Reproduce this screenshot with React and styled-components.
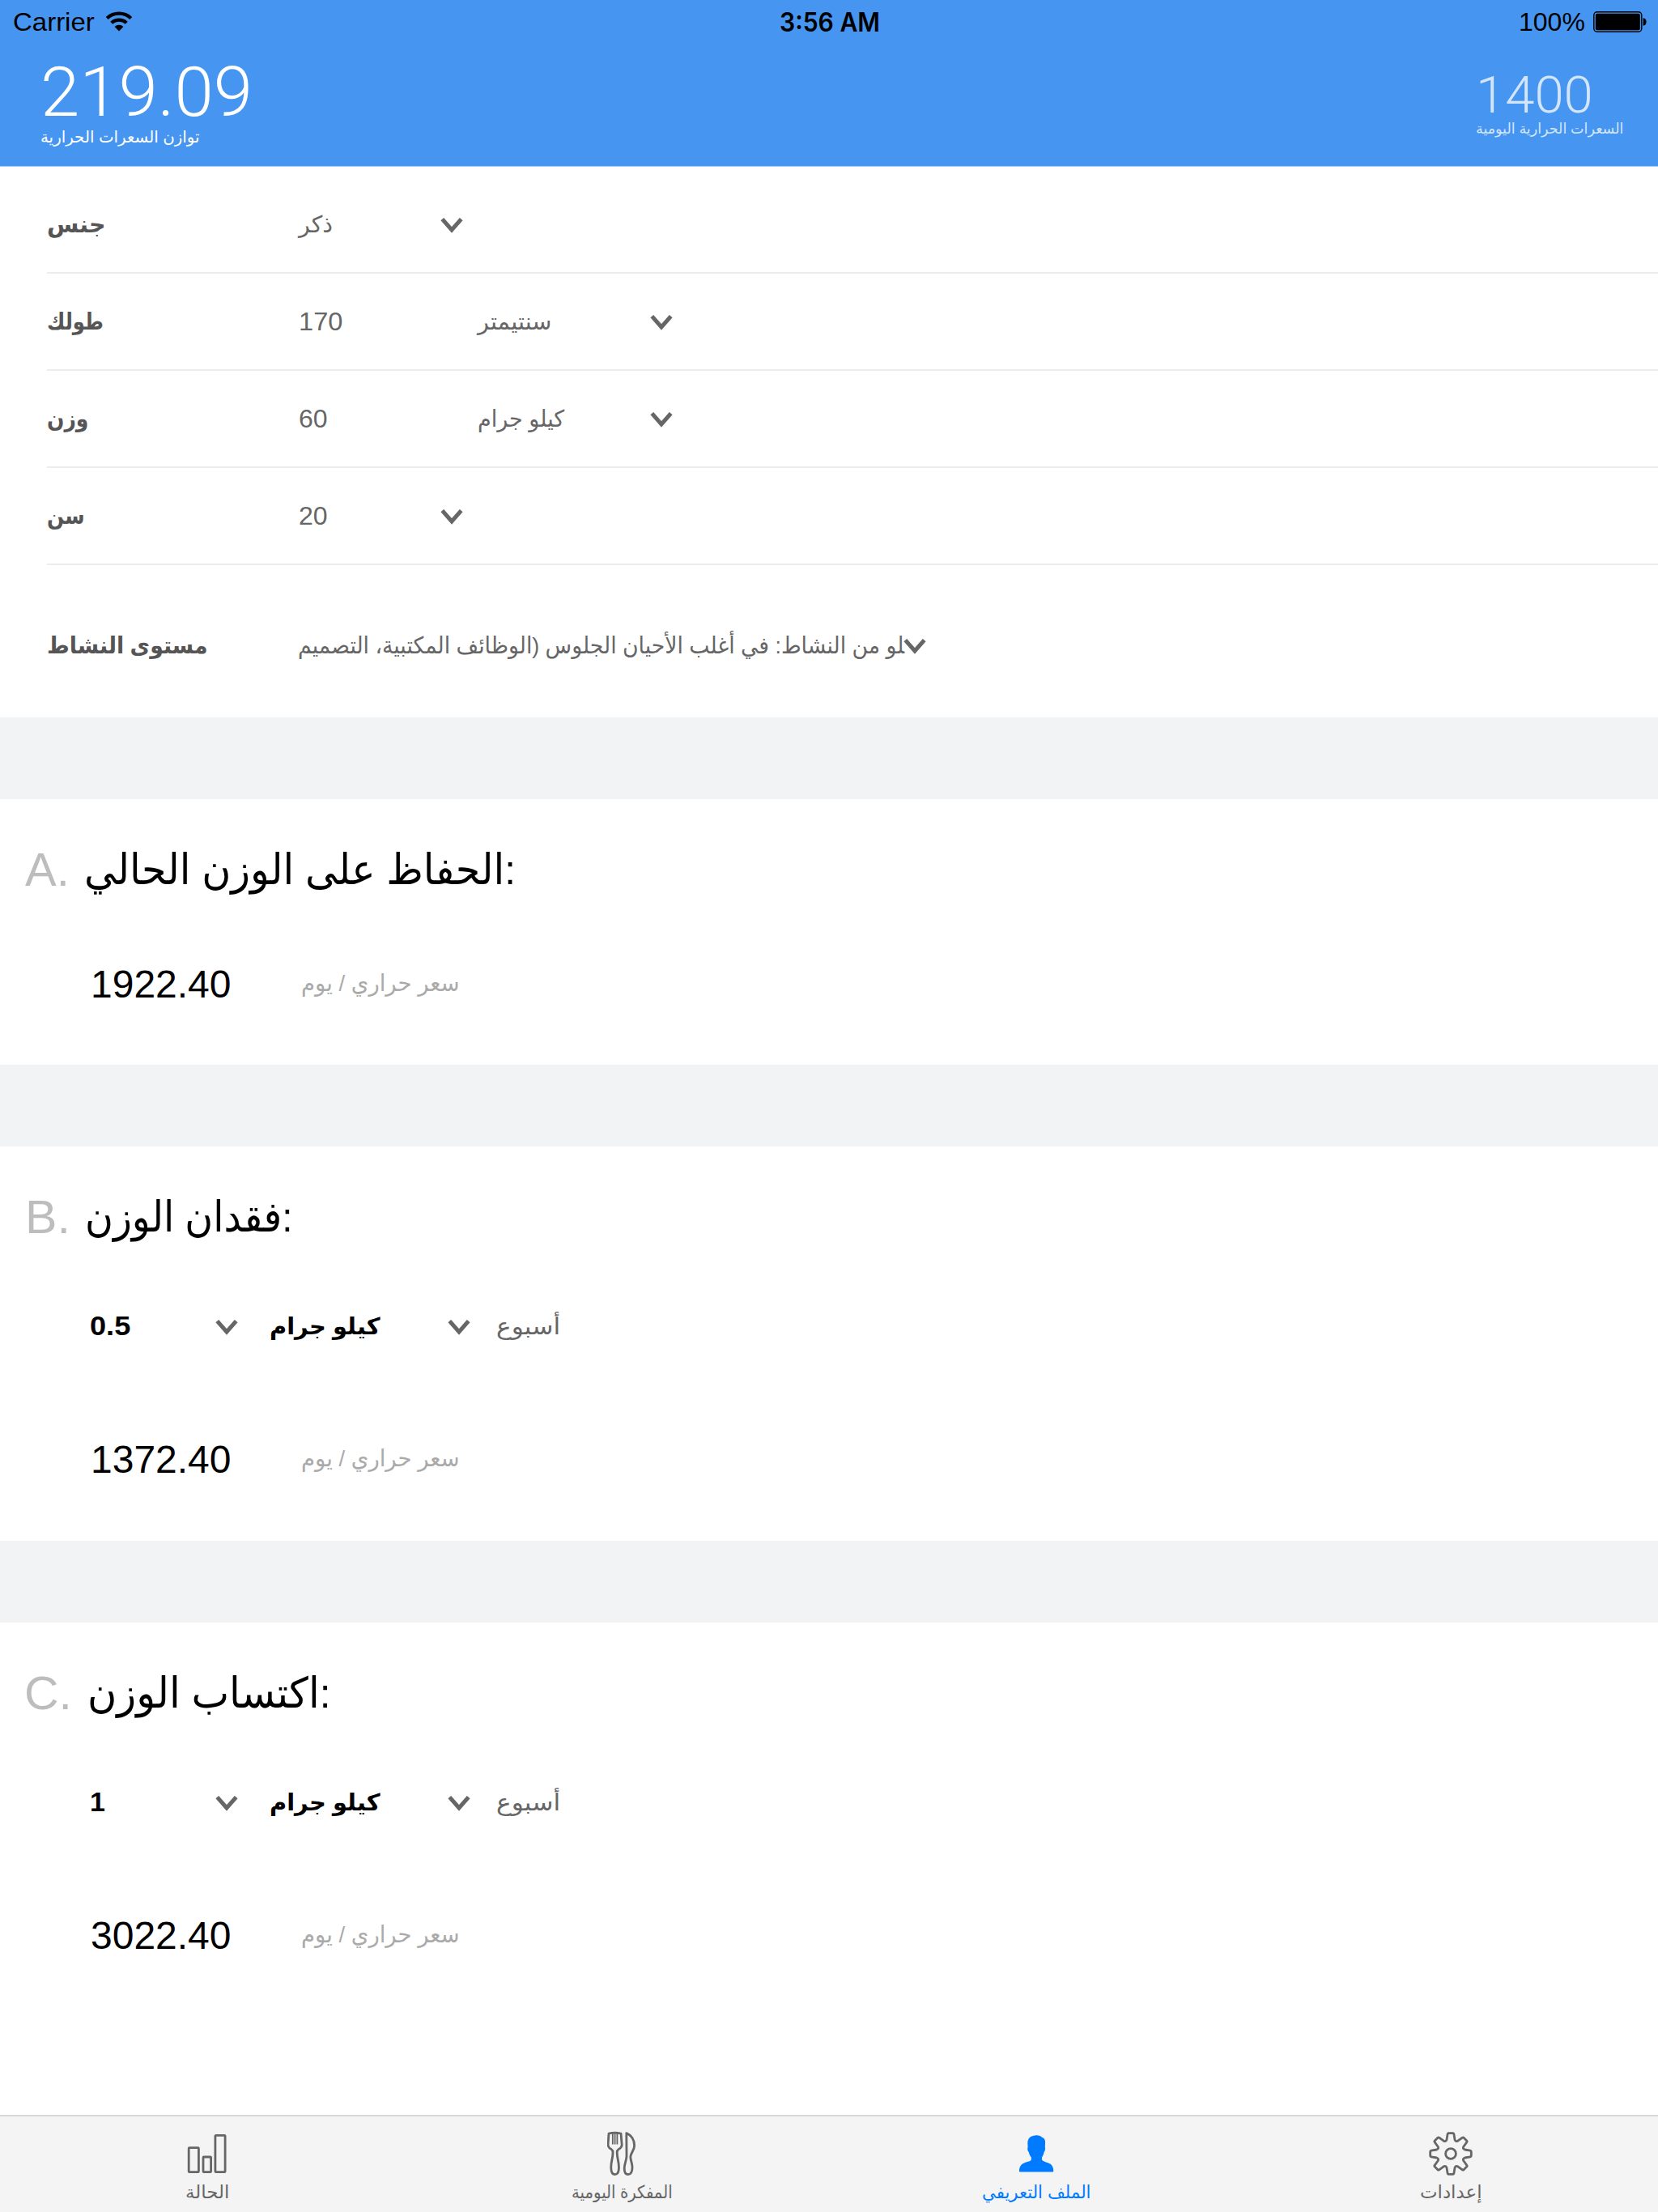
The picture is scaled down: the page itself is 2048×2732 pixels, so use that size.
import React, { useLayoutEffect, useRef, useState } from "react";
import styled, { createGlobalStyle } from "styled-components";

const GlobalStyle = createGlobalStyle`
  * { box-sizing: border-box; }
  body {
    margin: 0;
    background: #fff;
    font-family: "Liberation Sans", "DejaVu Sans", sans-serif;
    -webkit-font-smoothing: antialiased;
  }
`;

/* ---------- text fitted to a column width ---------- */

const TextBox = styled.span`
  display: block;
  flex: none;
  width: ${(p) => p.$width}px;
  margin-left: ${(p) => p.$gap || 0}px;
  font-size: ${(p) => p.$size}px;
  line-height: 1;
  font-weight: ${(p) => p.$weight || 400};
  font-family: ${(p) => (p.$face ? `${p.$face}, "Liberation Sans", sans-serif` : "inherit")};
  color: ${(p) => p.$color || "inherit"};
`;

const TextRun = styled.span`
  display: inline-block;
  white-space: pre;
  transform-origin: 0 50%;
  direction: ${(p) => (p.$rtl ? "rtl" : "ltr")};
`;

function Text({ children, width, size, rise = 0, rtl, ...rest }) {
  const run = useRef(null);
  const [scale, setScale] = useState(1);
  useLayoutEffect(() => {
    setScale(width / run.current.offsetWidth);
  }, [width, size, children]);
  const styleProps = Object.fromEntries(Object.entries(rest).map(([k, v]) => ["$" + k, v]));
  return (
    <TextBox $width={width} $size={size} {...styleProps}>
      <TextRun
        ref={run}
        $rtl={rtl}
        style={{ transform: `translateY(${-rise}px) scaleX(${scale})` }}
      >
        {children}
      </TextRun>
    </TextBox>
  );
}

const Arabic = (props) => <Text rtl size={28.5} rise={1} {...props} />;

/* ---------- layout ---------- */

const Screen = styled.div`
  display: flex;
  flex-direction: column;
  width: 2048px;
  height: 2732px;
  background: #fff;
  overflow: hidden;
`;

const Header = styled.header`
  flex: none;
  height: 206px;
  background: #4595f1;
  border-bottom: 1px solid #a6cdf8;
`;

const StatusBar = styled.div`
  display: grid;
  grid-template-columns: 1fr auto 1fr;
  align-items: center;
  height: 54px;
  padding: 0 14px 0 16px;
  color: #000;
`;

const StatusSide = styled.div`
  display: flex;
  align-items: center;
  justify-content: ${(p) => (p.$end ? "flex-end" : "flex-start")};
`;

const Totals = styled.div`
  display: flex;
  justify-content: space-between;
  padding: 0 43px 0 50px;
`;

const Total = styled.div`
  display: flex;
  flex-direction: column;
  padding-top: ${(p) => p.$top}px;
  gap: ${(p) => p.$gap}px;
  color: ${(p) => p.$color};
`;

const Form = styled.section`
  flex: none;
  height: 680px;
  padding: 12px 0 0 58px;
  color: #666;
`;

const Row = styled.div`
  display: flex;
  align-items: baseline;
  height: ${(p) => p.$height}px;
  padding-top: ${(p) => p.$top}px;
  padding-left: ${(p) => p.$left || 0}px;
  &::before {
    content: "\\200b";
    width: 0;
    font-size: ${(p) => p.$strut}px;
    line-height: 1;
  }
`;

const Field = styled(Row)`
  border-bottom: 2px solid #ececec;
`;

const Cell = styled.div`
  flex: none;
  width: ${(p) => p.$width}px;
`;

const Band = styled.div`
  flex: none;
  height: 101px;
  background: #f2f3f5;
`;

const Plan = styled.section`
  flex: none;
  height: ${(p) => p.$height}px;
`;

const ChevronIcon = styled.svg`
  flex: none;
  display: block;
  width: 28px;
  height: 19px;
  margin-bottom: ${(p) => p.$lift || 0}px;
`;

const Chevron = ({ lift = -2 }) => (
  <ChevronIcon viewBox="0 0 28 19" $lift={lift}>
    <path d="M2.3 1.6 L14 15 L25.7 1.6" fill="none" stroke="#666" strokeWidth="5" />
  </ChevronIcon>
);

/* ---------- tab bar ---------- */

const TabBar = styled.nav`
  flex: none;
  display: grid;
  grid-template-columns: repeat(4, 1fr);
  height: 120px;
  margin-top: auto;
  background: #f4f4f4;
  border-top: 2px solid #d8d8d8;
`;

const Tab = styled.div`
  display: flex;
  flex-direction: column;
  align-items: center;
  padding-top: 18px;
  gap: 9px;
  color: ${(p) => (p.$active ? "#007aff" : "#666")};
`;

const Icon = styled.svg`
  display: block;
  flex: none;
  width: ${(p) => p.$w}px;
  height: ${(p) => p.$h}px;
  fill: none;
  stroke: currentColor;
  stroke-width: 2.8;
  stroke-linejoin: round;
  stroke-linecap: round;
`;

const BarsIcon = () => (
  <Icon $w={56} $h={56} viewBox="0.4 0 56 56">
    <rect x="5.6" y="20.6" width="12.2" height="30" rx="0.8" />
    <rect x="23.4" y="32" width="9.6" height="18.6" rx="0.8" />
    <rect x="38.3" y="5.4" width="12.2" height="45.2" rx="0.8" />
  </Icon>
);

const CutleryIcon = () => (
  <Icon $w={36} $h={56} viewBox="0.6 0 36 56">
    <path d="M2.6 3 Q10 1.4 17.6 3 L18.8 17.5 Q18 21 14.6 22.6 Q12.6 23.8 12.8 27 C12.8 34 15.4 38 15 46 C14.8 51 12.8 53.6 10.2 53.6 C7.6 53.6 5.6 51 5.4 46 C5 38 7.6 34 7.6 27 Q7.8 23.8 5.8 22.6 Q2.4 21 1.6 17.5 Z" />
    <path d="M7.4 3 V16.5 M10.2 3 V16.5 M13 3 V16.5" strokeWidth="1.8" strokeLinecap="butt" />
    <path d="M24.4 2.6 C30.5 5 34.2 11 34.2 18 C34.2 24 29.6 27 29.4 32 C29.4 37 32 40 31.6 46 C31.2 51 29.2 53.6 26.4 53.6 C23.6 53.6 21.8 51 21.8 46 C21.8 40 24.4 37 24.6 31 Z" />
  </Icon>
);

const PersonIcon = () => (
  <Icon $w={44} $h={56} viewBox="-1 -5 44 56">
    <path
      fill="currentColor"
      stroke="none"
      d="M21 0.2 C24.4 0 26.8 1.2 28 2.8 C31 3.4 32.4 6 32 10.5 L31.8 15 C32.4 17 31.8 19.8 30.6 21 C30.2 24 29 26 28 27.6 V30.4 C29.4 33 34.6 33 38.6 35.8 C41.6 38.2 42.3 42 42.3 44.4 Q42.3 45.4 41.3 45.4 H0.9 Q-0.1 45.4 -0.1 44.4 C-0.1 42 0.6 38.2 3.6 35.8 C7.6 33 13.4 33 14.8 30.4 V27.6 C13.6 26 12.2 24 11.8 21 C10.4 19.8 9.8 17 10.6 15 L10.3 9.5 C10.5 3.4 15 0.4 21 0.2 Z"
    />
  </Icon>
);

const gearPath = (() => {
  const parts = [];
  for (let i = 0; i < 8; i += 1) {
    const a = (i * Math.PI) / 4;
    const at = (x, y) =>
      `${(x * Math.cos(a) - y * Math.sin(a)).toFixed(2)} ${(x * Math.sin(a) + y * Math.cos(a)).toFixed(2)}`;
    parts.push(`${i ? "L" : "M"}${at(-5, -17.4)} L${at(-3.9, -24.2)} Q${at(-3.7, -25.3)} ${at(-2.6, -25.3)}`);
    parts.push(`L${at(2.6, -25.3)} Q${at(3.7, -25.3)} ${at(3.9, -24.2)} L${at(5, -17.4)}`);
    const b = a + Math.PI / 4;
    const nx = -5 * Math.cos(b) + 17.4 * Math.sin(b);
    const ny = -5 * Math.sin(b) - 17.4 * Math.cos(b);
    const mid = a + Math.PI / 8;
    parts.push(`Q${(15.6 * Math.sin(mid)).toFixed(2)} ${(-15.6 * Math.cos(mid)).toFixed(2)} ${nx.toFixed(2)} ${ny.toFixed(2)}`);
  }
  return parts.join(" ") + " Z";
})();

const GearIcon = () => (
  <Icon $w={56} $h={56} viewBox="-28 -28 56 56">
    <path d={gearPath} />
    <circle r="6.4" />
  </Icon>
);

/* ---------- status icons ---------- */

const StatusIcon = styled.svg`
  display: block;
  flex: none;
  width: ${(p) => p.$w}px;
  height: ${(p) => p.$h}px;
  margin-left: ${(p) => p.$gap}px;
`;

const WifiIcon = () => (
  <StatusIcon $w={34} $h={26} $gap={13} viewBox="-17 -24.5 34 26">
    <path d="M-14.8 -16 A21.8 21.8 0 0 1 14.8 -16" fill="none" stroke="#000" strokeWidth="4.2" />
    <path d="M-9.3 -10.2 A13.8 13.8 0 0 1 9.3 -10.2" fill="none" stroke="#000" strokeWidth="4.2" />
    <path d="M0 0 L-5.4 -5.6 A7.8 7.8 0 0 1 5.4 -5.6 Z" fill="#000" />
  </StatusIcon>
);

const BatteryIcon = () => (
  <StatusIcon $w={66} $h={26} $gap={10} viewBox="0 0 66 26">
    <rect x="0.8" y="0.8" width="59" height="24.4" rx="4" fill="none" stroke="#000" strokeWidth="1.4" />
    <rect x="2.8" y="2.8" width="55" height="20.4" rx="2" fill="#000" />
    <path d="M61.6 8.2 Q65.6 9 65.6 13 Q65.6 17 61.6 17.8 Z" fill="#000" />
  </StatusIcon>
);

/* ---------- sections ---------- */

const Profile = () => (
  <Form>
    <Field $height={120} $top={43} $strut={32}>
      <Cell $width={311}>
        <Arabic width={72} weight={700} color="#555">جنس</Arabic>
      </Cell>
      <Cell $width={175}>
        <Arabic width={42}>ذكر</Arabic>
      </Cell>
      <Chevron />
    </Field>
    <Field $height={120} $top={43} $strut={32}>
      <Cell $width={311}>
        <Arabic width={70} weight={700} color="#555">طولك</Arabic>
      </Cell>
      <Cell $width={221}>
        <Text width={54} size={32}>170</Text>
      </Cell>
      <Cell $width={213}>
        <Arabic width={91}>سنتيمتر</Arabic>
      </Cell>
      <Chevron />
    </Field>
    <Field $height={120} $top={43} $strut={32}>
      <Cell $width={311}>
        <Arabic width={51} weight={700} color="#555">وزن</Arabic>
      </Cell>
      <Cell $width={221}>
        <Text width={36} size={32}>60</Text>
      </Cell>
      <Cell $width={213}>
        <Arabic width={107}>كيلو جرام</Arabic>
      </Cell>
      <Chevron />
    </Field>
    <Field $height={120} $top={43} $strut={32}>
      <Cell $width={311}>
        <Arabic width={47} weight={700} color="#555">سن</Arabic>
      </Cell>
      <Cell $width={175}>
        <Text width={36} size={32}>20</Text>
      </Cell>
      <Chevron />
    </Field>
    <Row $height={188} $top={83} $strut={32}>
      <Cell $width={310}>
        <Arabic width={199} weight={700} color="#555">مستوى النشاط</Arabic>
      </Cell>
      <Cell $width={748}>
        <Arabic width={749}>
          {"\u200dلو من النشاط: في أغلب الأحيان الجلوس (الوظائف المكتبية، التصميم"}
        </Arabic>
      </Cell>
      <Chevron />
    </Row>
  </Form>
);

const Heading = ({ letter, letterWidth, left, gap, width, children }) => (
  <Row $height={160} $top={58} $left={left} $strut={58}>
    <Text width={letterWidth} size={58} color="#bdbdbd">{letter}</Text>
    <Text width={width} size={52} gap={gap} rise={2} color="#000">{children}</Text>
  </Row>
);

const Rate = ({ amount, width }) => (
  <Row $height={158} $top={44} $left={111} $strut={34}>
    <Cell $width={155}>
      <Text width={width} size={34} weight={700} color="#000">{amount}</Text>
    </Cell>
    <Chevron lift={3} />
    <Cell $width={219}>
      <Arabic width={137} gap={39} weight={700} color="#000">كيلو جرام</Arabic>
    </Cell>
    <Cell $width={40} />
    <Chevron lift={3} />
    <Arabic width={79} gap={32} color="#666">أسبوع</Arabic>
  </Row>
);

const Result = ({ children }) => (
  <Row $height={168} $top={45} $left={112} $strut={48}>
    <Cell $width={260}>
      <Text width={174} size={48} color="#000">{children}</Text>
    </Cell>
    <Arabic width={196} rise={8} color="#aaa">سعر حراري / يوم</Arabic>
  </Row>
);

export default function App() {
  return (
    <Screen>
      <GlobalStyle />
      <Header>
        <StatusBar>
          <StatusSide>
            <Text width={101} size={32}>Carrier</Text>
            <WifiIcon />
          </StatusSide>
          <Text width={124} size={32} weight={600} rise={-1} face="Inter">3:56 AM</Text>
          <StatusSide $end>
            <Text width={82} size={32}>100%</Text>
            <BatteryIcon />
          </StatusSide>
        </StatusBar>
        <Totals>
          <Total $top={17} $gap={3} $color="#fff">
            <Text width={262} size={85} weight={300} rise={-1} face="Roboto">219.09</Text>
            <Arabic width={197} size={20} rise={0}>توازن السعرات الحرارية</Arabic>
          </Total>
          <Total $top={31} $gap={2} $color="#d3e5fb">
            <Text width={145} size={63} weight={300} rise={-1} face="Roboto">1400</Text>
            <Arabic width={182} size={18} rise={0}>السعرات الحرارية اليومية</Arabic>
          </Total>
        </Totals>
      </Header>
      <Profile />
      <Band />
      <Plan $height={328}>
        <Heading letter="A." letterWidth={55} left={31} gap={18} width={533}>الحفاظ على الوزن الحالي:</Heading>
        <Result>1922.40</Result>
      </Plan>
      <Band />
      <Plan $height={487}>
        <Heading letter="B." letterWidth={56} left={31} gap={18} width={256}>فقدان الوزن:</Heading>
        <Rate amount="0.5" width={50} />
        <Result>1372.40</Result>
      </Plan>
      <Band />
      <Plan $height={487}>
        <Heading letter="C." letterWidth={59} left={30} gap={19} width={300}>اكتساب الوزن:</Heading>
        <Rate amount="1" width={19} />
        <Result>3022.40</Result>
      </Plan>
      <TabBar>
        <Tab>
          <BarsIcon />
          <Arabic width={54} size={22} rise={0}>الحالة</Arabic>
        </Tab>
        <Tab>
          <CutleryIcon />
          <Arabic width={125} size={22} rise={0}>المفكرة اليومية</Arabic>
        </Tab>
        <Tab $active>
          <PersonIcon />
          <Arabic width={135} size={22} rise={0}>الملف التعريفي</Arabic>
        </Tab>
        <Tab>
          <GearIcon />
          <Arabic width={77} size={22} rise={0}>إعدادات</Arabic>
        </Tab>
      </TabBar>
    </Screen>
  );
}
